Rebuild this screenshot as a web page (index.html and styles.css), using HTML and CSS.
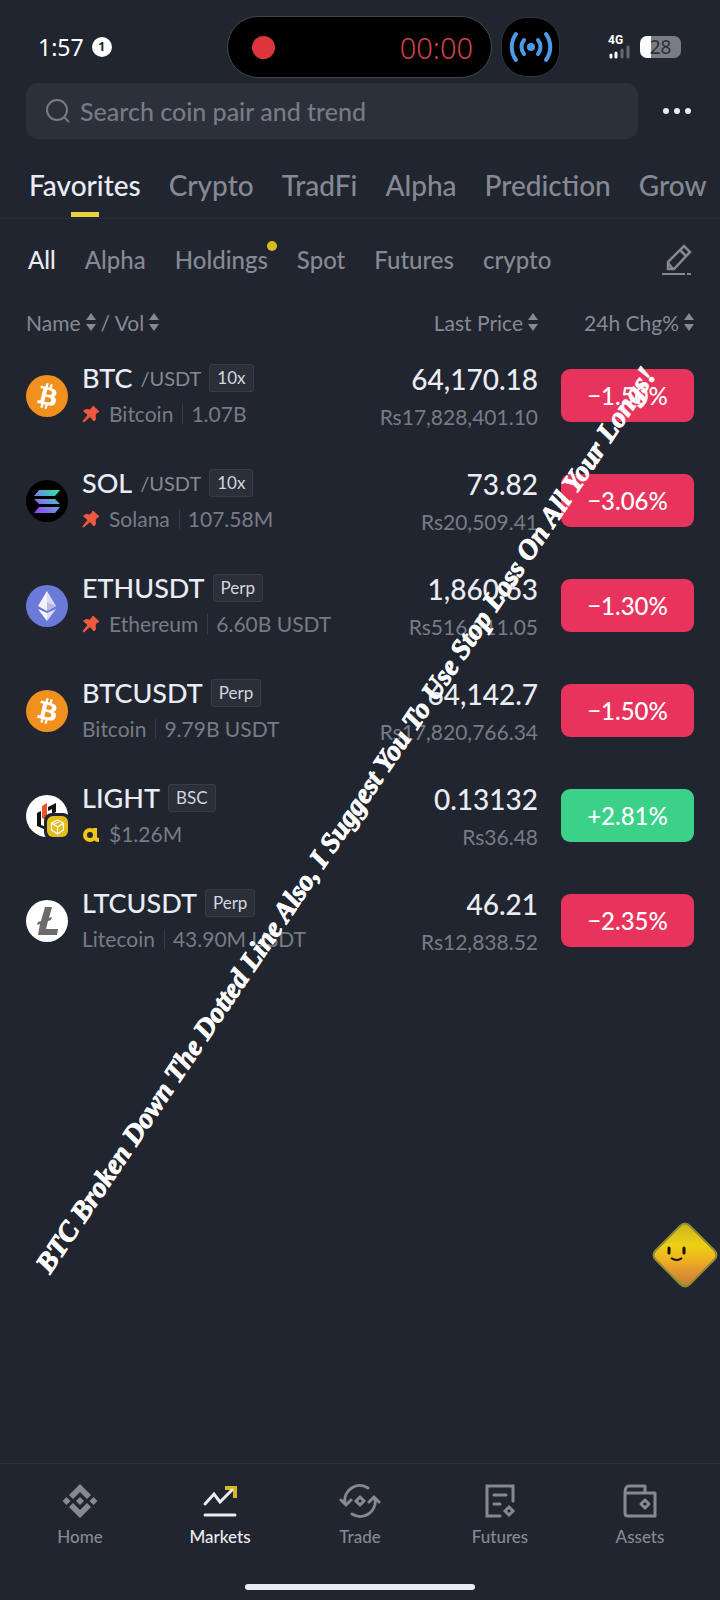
FILE: index.html
```html
<!DOCTYPE html>
<html lang="en">
<head>
    <meta charset="UTF-8">
    <meta name="viewport" content="width=device-width, initial-scale=1.0">
    <title>Markets</title>
    <link rel="stylesheet" href="styles.css">
</head>
<body>
    <!-- shared icons -->
    <svg class="sprite" aria-hidden="true">
        <symbol id="sort" viewBox="0 0 10 18">
            <path d="M5 0l5 7H0zM5 18l5-7H0z" fill="currentColor"/>
        </symbol>
        <symbol id="pin" viewBox="0 0 18 18">
            <path d="M11 1l6 5.500-1.500 1-1 0-1.500 3.500.5 3-1.500 2-4-4.500-5.500 5-1.500.5.5-1.500 4.500-5.500L1.500 6 4 4.500l3.500.5 2.500-2z" fill="#f0583f" stroke="#f0583f" stroke-linejoin="round"/>
        </symbol>
        <symbol id="btc" viewBox="0 0 32 32">
            <circle cx="16" cy="16" r="16" fill="#f0901f"/>
            <path fill="#fff" d="M23.189 14.02c.314-2.096-1.283-3.223-3.465-3.975l.708-2.84-1.728-.43-.69 2.765c-.454-.114-.92-.22-1.385-.326l.695-2.783L15.596 6l-.708 2.839c-.376-.086-.746-.17-1.104-.26l.002-.009-2.384-.595-.46 1.846s1.283.294 1.256.312c.7.175.826.638.805 1.006l-.806 3.235c.048.012.11.03.18.057l-.183-.045-1.13 4.532c-.086.212-.303.531-.793.41.018.025-1.256-.313-1.256-.313l-.858 1.978 2.25.561c.418.105.828.215 1.231.318l-.715 2.872 1.727.43.708-2.84c.472.127.93.245 1.378.357l-.706 2.828 1.728.43.715-2.866c2.948.558 5.164.333 6.097-2.333.752-2.146-.037-3.385-1.588-4.192 1.13-.26 1.98-1.003 2.207-2.538zm-3.95 5.538c-.533 2.147-4.148.986-5.32.695l.95-3.805c1.172.293 4.929.872 4.37 3.11zm.535-5.569c-.487 1.953-3.495.96-4.47.717l.86-3.45c.975.243 4.118.696 3.61 2.733z"/>
        </symbol>
    </svg>

    <header class="status-bar">
        <div class="status-left">
            <span class="clock">1:57</span>
            <span class="notice">1</span>
        </div>
        <div class="status-mid">
            <div class="island">
                <span class="rec-dot"></span>
                <span class="rec-time">00:00</span>
            </div>
            <div class="hotspot">
                <svg width="44" height="34" viewBox="0 0 44 34" fill="none" stroke="#4a9be8" stroke-width="4" stroke-linecap="round">
                    <circle cx="22" cy="17" r="4" fill="#4a9be8" stroke="none"/>
                    <path d="M15 10a11 11 0 0 0 0 14M29 10a11 11 0 0 1 0 14M7 4a22 22 0 0 0 0 26M37 4a22 22 0 0 1 0 26"/>
                </svg>
            </div>
        </div>
        <div class="status-right">
            <div class="signal">
                <span>4G</span>
                <svg width="22" height="14" viewBox="0 0 22 14" stroke-width="3" stroke-linecap="round">
                    <path d="M3 10v2M8 8v4" stroke="#fff"/>
                    <path d="M14 5v7M20 2v10" stroke="#666973"/>
                </svg>
            </div>
            <div class="battery">28</div>
        </div>
    </header>

    <form class="search-row">
        <label class="search-box">
            <svg width="24" height="24" viewBox="0 0 24 24" fill="none" stroke="currentColor" stroke-width="2">
                <circle cx="11" cy="11" r="10"/>
                <path d="M18 18l5 5"/>
            </svg>
            <input type="search" placeholder="Search coin pair and trend" aria-label="Search coin pair and trend">
        </label>
        <button type="button" class="more-btn" aria-label="More">
            <svg width="30" height="8" viewBox="0 0 30 8" fill="currentColor">
                <circle cx="4" cy="4" r="3"/><circle cx="15" cy="4" r="3"/><circle cx="26" cy="4" r="3"/>
            </svg>
        </button>
    </form>

    <nav class="tabs">
        <a href="#" class="active">Favorites</a>
        <a href="#">Crypto</a>
        <a href="#">TradFi</a>
        <a href="#">Alpha</a>
        <a href="#">Prediction</a>
        <a href="#">Grow</a>
    </nav>

    <nav class="subtabs">
        <a href="#" class="active">All</a>
        <a href="#">Alpha</a>
        <a href="#" class="has-dot">Holdings</a>
        <a href="#">Spot</a>
        <a href="#">Futures</a>
        <a href="#">crypto</a>
        <button type="button" class="edit-btn" aria-label="Edit">
            <svg width="30" height="32" viewBox="0 0 30 32" fill="none" stroke="currentColor" stroke-width="2.500">
                <path d="M6 18L22 2l6 6-16 17H6z"/>
                <path d="M18 6l6 6M6 19l5 6"/>
                <path d="M0 30h23M25 30h4" stroke-width="2"/>
            </svg>
        </button>
    </nav>

    <main>
        <table class="market">
            <thead>
                <tr>
                    <th class="col-name">
                        <div class="head">Name <svg><use href="#sort"/></svg> / Vol <svg><use href="#sort"/></svg></div>
                    </th>
                    <th class="col-price">
                        <div class="head end">Last Price <svg><use href="#sort"/></svg></div>
                    </th>
                    <th class="col-change">
                        <div class="head end">24h Chg% <svg><use href="#sort"/></svg></div>
                    </th>
                </tr>
            </thead>
            <tbody>
                <tr>
                    <td>
                        <div class="coin">
                            <svg class="logo"><use href="#btc"/></svg>
                            <div>
                                <div class="pair"><b>BTC</b><span class="quote">/USDT</span><span class="tag">10x</span></div>
                                <div class="info"><svg class="pin"><use href="#pin"/></svg><span>Bitcoin</span><span class="vol">1.07B</span></div>
                            </div>
                        </div>
                    </td>
                    <td class="price"><b>64,170.18</b><span>Rs17,828,401.10</span></td>
                    <td><div class="change down">−1.50%</div></td>
                </tr>
                <tr>
                    <td>
                        <div class="coin">
                            <svg class="logo" viewBox="0 0 42 42">
                                <defs>
                                    <linearGradient id="sol" gradientUnits="userSpaceOnUse" x1="8" y1="34" x2="32" y2="8">
                                        <stop offset="0" stop-color="#9a35f5"/>
                                        <stop offset=".5" stop-color="#6d8fe0"/>
                                        <stop offset="1" stop-color="#1df09a"/>
                                    </linearGradient>
                                </defs>
                                <circle cx="21" cy="21" r="21" fill="#000"/>
                                <path fill="url(#sol)" d="M13 10h21l-5 6H8zM8 19h21l5 5H13zM13 27h21l-5 6H8z"/>
                            </svg>
                            <div>
                                <div class="pair"><b>SOL</b><span class="quote">/USDT</span><span class="tag">10x</span></div>
                                <div class="info"><svg class="pin"><use href="#pin"/></svg><span>Solana</span><span class="vol">107.58M</span></div>
                            </div>
                        </div>
                    </td>
                    <td class="price"><b>73.82</b><span>Rs20,509.41</span></td>
                    <td><div class="change down">−3.06%</div></td>
                </tr>
                <tr>
                    <td>
                        <div class="coin">
                            <svg class="logo" viewBox="0 0 42 42">
                                <circle cx="21" cy="21" r="21" fill="#6b79d9"/>
                                <path fill="#f2f3fa" d="M21 6v20l-9-5z"/>
                                <path fill="#d9dcf0" d="M21 6v20l9-5zM21 28v8l9-12z"/>
                                <path fill="#fff" d="M21 28v8l-9-12z"/>
                                <path fill="#b5bbe2" d="M21 17v9l9-5z"/>
                            </svg>
                            <div>
                                <div class="pair"><b>ETHUSDT</b><span class="tag">Perp</span></div>
                                <div class="info"><svg class="pin"><use href="#pin"/></svg><span>Ethereum</span><span class="vol">6.60B USDT</span></div>
                            </div>
                        </div>
                    </td>
                    <td class="price"><b>1,860.63</b><span>Rs516,911.05</span></td>
                    <td><div class="change down">−1.30%</div></td>
                </tr>
                <tr>
                    <td>
                        <div class="coin">
                            <svg class="logo"><use href="#btc"/></svg>
                            <div>
                                <div class="pair"><b>BTCUSDT</b><span class="tag">Perp</span></div>
                                <div class="info"><span>Bitcoin</span><span class="vol">9.79B USDT</span></div>
                            </div>
                        </div>
                    </td>
                    <td class="price"><b>64,142.7</b><span>Rs17,820,766.34</span></td>
                    <td><div class="change down">−1.50%</div></td>
                </tr>
                <tr>
                    <td>
                        <div class="coin">
                            <svg class="logo" viewBox="0 0 42 42">
                                <circle cx="21" cy="21" r="21" fill="#fff"/>
                                <path fill="#111" d="M11 18l4-2v14l5 2v3l-9-4zM22 12l8-4v9l-4 2v-5l-4 2z"/>
                                <path fill="#e8552b" d="M16 11l5-3v12l3 1v5l-8-3z"/>
                                <rect x="18" y="18" width="27" height="27" rx="8" fill="#21252f"/>
                                <rect x="21" y="21" width="21" height="21" rx="6" fill="#e2bd1c"/>
                                <path d="M31.500 25l6 3v7l-6 4-6-4v-7zM25.500 28l6 4 6-4M31.500 32v7M28 29l5-2" fill="none" stroke="#fff" stroke-width="1.200"/>
                            </svg>
                            <div>
                                <div class="pair"><b>LIGHT</b><span class="tag">BSC</span></div>
                                <div class="info">
                                    <svg class="pin" viewBox="0 0 18 18" fill="none" stroke="#f0c419" stroke-width="4">
                                        <circle cx="8" cy="10" r="5"/>
                                        <path d="M13 3v9q0 3 4 3"/>
                                    </svg>
                                    <span>$1.26M</span>
                                </div>
                            </div>
                        </div>
                    </td>
                    <td class="price"><b>0.13132</b><span>Rs36.48</span></td>
                    <td><div class="change up">+2.81%</div></td>
                </tr>
                <tr>
                    <td>
                        <div class="coin">
                            <svg class="logo" viewBox="0 0 42 42">
                                <circle cx="21" cy="21" r="21" fill="#fff"/>
                                <path fill="#6b6b6b" d="M19 7h7l-3 11 3-1-1 3-3 1-2 8h12l-1 6H12l2-11-3 1 1-3 3-1z"/>
                            </svg>
                            <div>
                                <div class="pair"><b>LTCUSDT</b><span class="tag">Perp</span></div>
                                <div class="info"><span>Litecoin</span><span class="vol">43.90M USDT</span></div>
                            </div>
                        </div>
                    </td>
                    <td class="price"><b>46.21</b><span>Rs12,838.52</span></td>
                    <td><div class="change down">−2.35%</div></td>
                </tr>
            </tbody>
        </table>
    </main>

    <nav class="bottom-nav">
        <a href="#">
            <svg viewBox="0 0 36 36" fill="currentColor">
                <path d="M18 1l11 11-4 4-7-7-7 7-4-4zM18 35l11-11-4-4-7 7-7-7-4 4zM18 14l4 4-4 4-4-4zM4.500 14l4 4-4 4-4-4zM31.500 14l4 4-4 4-4-4z"/>
            </svg>
            Home
        </a>
        <a href="#" class="active">
            <svg viewBox="0 0 36 36" fill="none" stroke="currentColor" stroke-width="3" stroke-linecap="round">
                <path d="M23 5h10v10" stroke="#d9b71f" stroke-width="4" stroke-linecap="butt"/>
                <path d="M3 21l9-10 6 8L30 7M3 32h30"/>
            </svg>
            Markets
        </a>
        <a href="#">
            <svg class="wide" viewBox="0 0 42 36" fill="none" stroke="currentColor" stroke-width="3" stroke-linecap="round">
                <path d="M29 5A15 15 0 0 0 6 20M2 17l5 5 5-5M13 31a15 15 0 0 0 23-15M30 19l5-5 5 5"/>
                <path d="M21 14l4 4-4 4-4-4z"/>
            </svg>
            Trade
        </a>
        <a href="#">
            <svg viewBox="0 0 36 36" fill="none" stroke="currentColor" stroke-width="3" stroke-linecap="round">
                <path d="M31 18V3H5v30h13M12 12h12M12 21h6"/>
                <path d="M27 24l4 4-4 4-4-4z"/>
            </svg>
            Futures
        </a>
        <a href="#">
            <svg viewBox="0 0 36 36" fill="none" stroke="currentColor" stroke-width="3" stroke-linejoin="round">
                <path d="M3 10v20q0 3 3 3h27V10H3q0-7 4-7h16v7"/>
                <path d="M23 17l4 4-4 4-4-4z"/>
            </svg>
            Assets
        </a>
    </nav>
    <div class="home-bar"></div>

    <!-- floating layers -->
    <button type="button" class="mascot" aria-label="Assistant">
        <svg width="66" height="66" viewBox="0 0 66 66">
            <defs>
                <linearGradient id="gem" x1="0" y1="0" x2="0" y2="1">
                    <stop offset="0" stop-color="#c9b51c"/>
                    <stop offset=".35" stop-color="#eed014"/>
                    <stop offset=".6" stop-color="#eeae22"/>
                    <stop offset=".85" stop-color="#d98a35"/>
                    <stop offset="1" stop-color="#a88a2c"/>
                </linearGradient>
            </defs>
            <path d="M28 4q5-5 10 0l24 24q5 5 0 10L38 62q-5 5-10 0L4 38q-5-5 0-10z" fill="url(#gem)" stroke="#8f8a35" stroke-width="2"/>
            <path d="M17 26v5M32 26v5" stroke="#111" stroke-width="3" stroke-linecap="round"/>
            <path d="M19 36q6 4 11 0" fill="none" stroke="#111" stroke-width="2"/>
        </svg>
    </button>
    <p class="caption">BTC Broken Down The Dotted Line Also, I Suggest You To Use Stop Loss On All Your Longs!</p>
</body>
</html>
```
FILE: styles.css
```css
:root {
    --bg: #21252f;
    --panel: #2b303b;
    --line: #2c313b;
    --text: #eaecf4;
    --gray: #868993;
    --dim: #787b85;
    --ylw: #ecd23c;
    --red: #e8335c;
    --grn: #3bd188;
}

* {
    box-sizing: border-box;
}

body {
    margin: 0;
    min-height: 100vh;
    display: flex;
    flex-direction: column;
    position: relative;
    overflow-x: hidden;
    background-color: var(--bg);
    color: var(--text);
    font-family: Lato, "Liberation Sans", sans-serif;
}

a {
    color: inherit;
    text-decoration: none;
}

button {
    padding: 0;
    border: 0;
    background: none;
    color: inherit;
    cursor: pointer;
}

svg {
    display: block;
    flex-shrink: 0;
}

.sprite {
    position: absolute;
    width: 0;
    height: 0;
}

/* status bar */
.status-bar {
    display: grid;
    grid-template-columns: 227fr 333fr 160fr;
    align-items: center;
    padding: 16px 0 5px;
    color: #fff;
}

.status-left {
    display: flex;
    align-items: center;
    gap: 8px;
    padding-left: 38px;
}

.clock {
    font-family: "Noto Sans", sans-serif;
    font-size: 23px;
    line-height: 32px;
}

.notice {
    width: 20px;
    height: 20px;
    border-radius: 50%;
    background-color: #fff;
    color: #222;
    font-family: "Noto Sans", sans-serif;
    font-size: 12px;
    font-weight: bold;
    line-height: 20px;
    text-align: center;
}

.status-mid {
    display: flex;
    align-items: center;
    gap: 9px;
}

.island {
    flex: 1;
    height: 62px;
    display: flex;
    align-items: center;
    justify-content: space-between;
    padding: 0 18px 0 24px;
    border: 1px solid #45474e;
    border-radius: 31px;
    background-color: #000;
}

.rec-dot {
    width: 23px;
    height: 23px;
    border-radius: 50%;
    background-color: #dc363b;
}

.rec-time {
    color: #d2404a;
    font-family: "Noto Sans", sans-serif;
    font-size: 29px;
    font-weight: 300;
}

.hotspot {
    width: 59px;
    height: 60px;
    display: flex;
    align-items: center;
    justify-content: center;
    border: 1px solid #33353c;
    border-radius: 26px;
    background-color: #000;
}

.status-right {
    display: flex;
    align-items: center;
    justify-content: flex-end;
    gap: 10px;
    padding-right: 39px;
}

.signal span {
    display: block;
    font-family: Roboto, sans-serif;
    font-size: 12px;
    font-weight: bold;
    line-height: 10px;
}

.battery {
    width: 41px;
    height: 22px;
    border-radius: 7px;
    background: linear-gradient(to right, #fff 11px, #7b7d84 11px);
    color: #2c2e36;
    font-family: "Noto Sans", sans-serif;
    font-size: 19px;
    line-height: 23px;
    text-align: center;
}

/* search */
.search-row {
    display: flex;
    align-items: center;
    gap: 24px;
    padding: 0 28px 0 26px;
}

.search-box {
    flex: 1;
    height: 56px;
    display: flex;
    align-items: center;
    gap: 10px;
    padding: 0 20px;
    border-radius: 12px;
    background-color: var(--panel);
    color: var(--dim);
}

.search-box input {
    flex: 1;
    min-width: 0;
    padding: 0;
    border: 0;
    outline: 0;
    background: none;
    color: var(--text);
    font-family: inherit;
    font-size: 25px;
    font-weight: 500;
}

.search-box input::placeholder {
    color: var(--dim);
    opacity: 1;
}

/* tabs */
.tabs {
    display: flex;
    gap: 28px;
    padding: 17px 0 0 29px;
    overflow: hidden;
    border-bottom: 1px solid #282c36;
    color: var(--gray);
    font-size: 28px;
    font-weight: 500;
    line-height: 58px;
    white-space: nowrap;
}

.tabs a {
    height: 62px;
}

.tabs .active {
    color: var(--text);
    display: flex;
    flex-direction: column;
    align-items: center;
}

.tabs .active::after {
    content: "";
    width: 28px;
    height: 5px;
    margin-top: -2px;
    background-color: var(--ylw);
}

.subtabs {
    display: flex;
    align-items: center;
    gap: 29px;
    padding: 20px 28px 0;
    color: var(--gray);
    font-size: 24px;
    font-weight: 500;
    line-height: 42px;
}

.subtabs .active {
    color: var(--text);
}

.has-dot {
    position: relative;
}

.has-dot::after {
    content: "";
    position: absolute;
    top: 2px;
    right: -9px;
    width: 10px;
    height: 10px;
    border-radius: 50%;
    background-color: #dcb91f;
}

.edit-btn {
    margin-left: auto;
}

/* market list */
main {
    flex: 1;
    padding: 20px 26px 0;
}

.market {
    width: 100%;
    table-layout: fixed;
    border-collapse: collapse;
}

.market th,
.market td {
    padding: 0;
    font-weight: normal;
    white-space: nowrap;
}

.col-change {
    width: 156px;
}

.col-price {
    width: 180px;
}

.head {
    height: 42px;
    display: flex;
    align-items: center;
    gap: 5px;
    color: var(--gray);
    font-size: 21px;
}

.head svg {
    width: 10px;
    height: 18px;
}

.end {
    justify-content: flex-end;
}

.market td {
    height: 105px;
}

.coin {
    display: flex;
    align-items: center;
    gap: 14px;
}

.logo {
    width: 42px;
    height: 42px;
}

.pair {
    height: 34px;
    display: flex;
    align-items: center;
    gap: 8px;
}

.pair b {
    font-size: 27px;
    font-weight: 500;
}

.quote {
    color: var(--gray);
    font-size: 20px;
}

.tag {
    padding: 0 7px;
    border: 1px solid #383c46;
    border-radius: 3px;
    background-color: #2b2f3a;
    color: #d3d6de;
    font-size: 17px;
    line-height: 26px;
}

.info {
    height: 34px;
    display: flex;
    align-items: center;
    gap: 9px;
    margin-top: 2px;
    color: var(--dim);
    font-size: 21px;
}

.pin {
    width: 18px;
    height: 18px;
}

.vol {
    padding-left: 9px;
    background: linear-gradient(#383c46, #383c46) left center / 1px 20px no-repeat;
}

.price {
    text-align: right;
}

.price b,
.price span {
    display: block;
    line-height: 34px;
}

.price b {
    padding-top: 4px;
    font-size: 28px;
    font-weight: 500;
}

.price span {
    padding-top: 4px;
    color: var(--dim);
    font-size: 21px;
}

.change {
    height: 53px;
    margin-left: 23px;
    border-radius: 9px;
    color: #fff;
    font-size: 24px;
    font-weight: 500;
    line-height: 53px;
    text-align: center;
}

.down {
    background-color: var(--red);
}

.up {
    background-color: var(--grn);
}

/* bottom navigation */
.bottom-nav {
    display: grid;
    grid-template-columns: repeat(5, 1fr);
    padding: 19px 10px 0;
    border-top: 1px solid var(--line);
    color: var(--gray);
    font-size: 17px;
    font-weight: 500;
    line-height: 32px;
}

.bottom-nav a {
    display: flex;
    flex-direction: column;
    align-items: center;
    gap: 2px;
}

.bottom-nav svg {
    width: 36px;
    height: 36px;
}

.bottom-nav .wide {
    width: 42px;
}

.bottom-nav .active {
    color: var(--text);
}

.home-bar {
    width: 32%;
    height: 6px;
    margin: 31px auto 10px;
    border-radius: 3px;
    background-color: var(--text);
}

/* floating layers */
.mascot {
    position: absolute;
    right: 2px;
    top: 1222px;
}

.caption {
    position: absolute;
    left: 55px;
    top: 1248px;
    margin: 0;
    color: #fff;
    font-family: "Liberation Serif", serif;
    font-size: 28px;
    font-style: italic;
    font-weight: bold;
    line-height: 30px;
    white-space: nowrap;
    -webkit-text-stroke: 1px #fff;
    transform: rotate(-56deg);
    transform-origin: 0 100%;
}
```
